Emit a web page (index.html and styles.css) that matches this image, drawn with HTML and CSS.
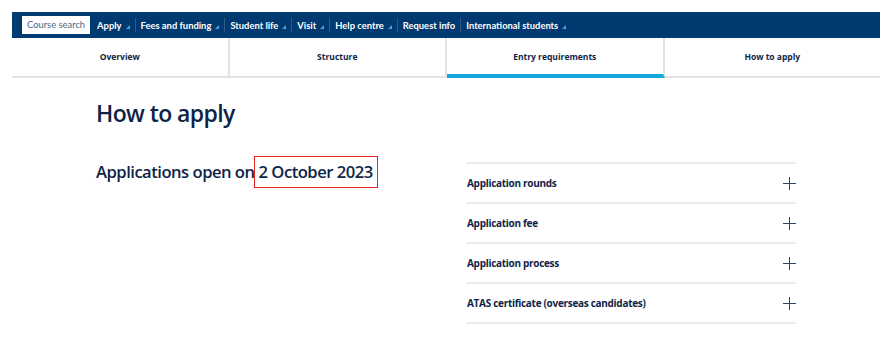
FILE: index.html
```html
<!DOCTYPE html>
<html lang="en">
<head>
    <meta charset="UTF-8">
    <meta name="viewport" content="width=device-width, initial-scale=1.0">
    <title>How to apply</title>
    <link rel="stylesheet" href="styles.css">
</head>
<body>
    <div class="page">
        <nav class="topnav">
            <a class="search" href="#">Course search</a>
            <a class="item" href="#">Apply <span class="tri"></span></a>
            <a class="item" href="#">Fees and funding <span class="tri"></span></a>
            <a class="item" href="#">Student life <span class="tri"></span></a>
            <a class="item" href="#">Visit <span class="tri"></span></a>
            <a class="item" href="#">Help centre <span class="tri"></span></a>
            <a class="item" href="#">Request info</a>
            <a class="item last" href="#">International students <span class="tri"></span></a>
        </nav>

        <div class="tabs">
            <a class="tab" href="#">Overview</a>
            <a class="tab" href="#">Structure</a>
            <a class="tab active" href="#">Entry requirements</a>
            <a class="tab" href="#">How to apply</a>
        </div>

        <main class="content">
            <h1>How to apply</h1>
            <div class="columns">
                <h2 class="opens">Applications open on<span class="date">2 October 2023</span></h2>
                <div class="accordion">
                    <div class="acc-row"><span>Application rounds</span><span class="plus"></span></div>
                    <div class="acc-row"><span>Application fee</span><span class="plus"></span></div>
                    <div class="acc-row"><span>Application process</span><span class="plus"></span></div>
                    <div class="acc-row"><span>ATAS certificate (overseas candidates)</span><span class="plus"></span></div>
                </div>
            </div>
        </main>
    </div>
</body>
</html>
```

FILE: styles.css
```css
body {
    margin: 0;
    background: #ffffff;
    font-family: "Open Sans", "Noto Sans", Arial, sans-serif;
    color: #0e2447;
}
.page {
    padding: 12px 6px 0 12px;
}
a {
    text-decoration: none;
}
.topnav {
    display: flex;
    align-items: center;
    height: 26px;
    background: #003a70;
    padding-left: 10px;
    font-family: Lato, "Open Sans", Arial, sans-serif;
}
.search {
    background: #ffffff;
    color: #4d6786;
    font-size: 9.4px;
    height: 18px;
    line-height: 18px;
    padding: 0 5px;
    margin-right: 7px;
}
.item {
    color: #ffffff;
    font-size: 9.4px;
    font-weight: 700;
    padding: 0 5px 0 0;
    margin-right: 5px;
    display: flex;
    align-items: center;
    height: 14px;
    border-right: 1px solid #2c5a8a;
}
.item.last {
    border-right: none;
}
.tri {
    display: inline-block;
    width: 0;
    height: 0;
    margin-left: 4px;
    margin-top: 4px;
    border-left: 4px solid transparent;
    border-bottom: 4px solid #4ba3dd;
}
.tabs {
    display: flex;
    height: 40px;
    border-bottom: 2px solid #e3e3e3;
    box-sizing: border-box;
}
.tab {
    flex: 1;
    display: flex;
    align-items: center;
    justify-content: center;
    font-size: 8.5px;
    font-weight: 700;
    color: #0e2447;
    border-right: 2px solid #e3e3e3;
    box-sizing: border-box;
    padding-bottom: 2px;
}
.tab:last-child {
    border-right: none;
}
.tab.active {
    border-bottom: 4px solid #18a7d9;
    margin-bottom: -2px;
    padding-bottom: 0;
}
.content {
    padding-left: 84px;
}
h1 {
    margin: 18px 0 0;
    font-size: 23px;
    font-weight: 600;
    letter-spacing: -0.6px;
    line-height: 34px;
}
.columns {
    display: flex;
    margin-top: 28px;
}
.opens {
    width: 370px;
    margin: 0;
    font-size: 16.6px;
    font-weight: 600;
    letter-spacing: -0.5px;
    line-height: 22px;
    padding-top: 3px;
}
.date {
    border: 1.5px solid #e8251e;
    padding: 3px 4px 4px 4px;
    margin-left: -1px;
}
.accordion {
    width: 330px;
    margin-top: 4px;
    border-top: 2px solid #ececec;
}
.acc-row {
    display: flex;
    justify-content: space-between;
    align-items: center;
    height: 38px;
    border-bottom: 2px solid #ececec;
    font-size: 10px;
    font-weight: 700;
    letter-spacing: -0.3px;
    padding-left: 1px;
}
.plus {
    position: relative;
    width: 13px;
    height: 13px;
}
.plus::before,
.plus::after {
    content: "";
    position: absolute;
    background: #33465f;
}
.plus::before {
    left: 0;
    top: 6px;
    width: 13px;
    height: 1px;
}
.plus::after {
    left: 6px;
    top: 0;
    width: 1px;
    height: 13px;
}
```
